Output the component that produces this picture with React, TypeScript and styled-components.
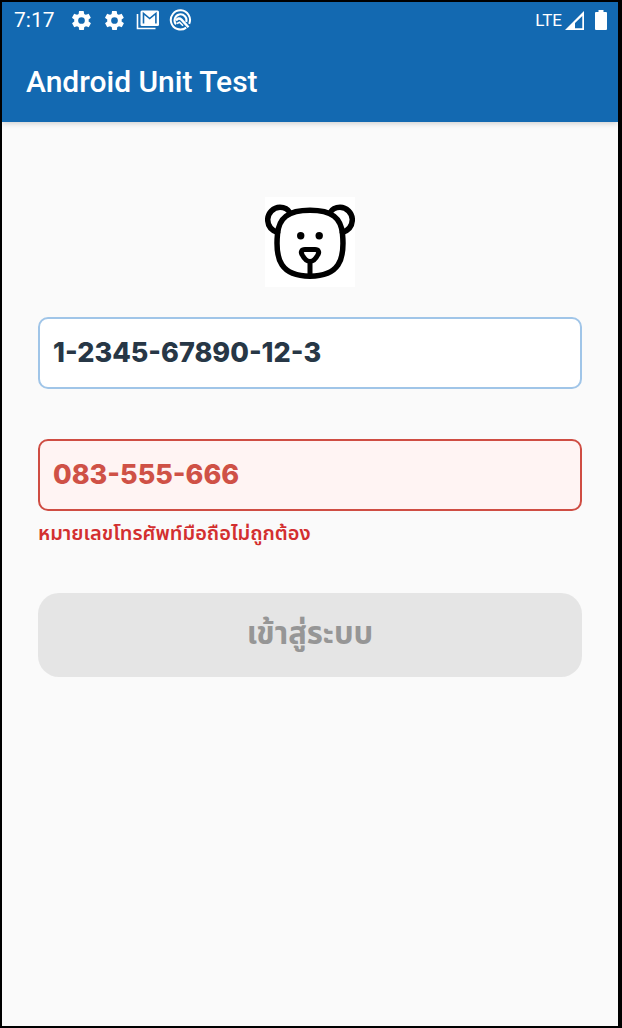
import React, { useState } from "react";
import styled, { createGlobalStyle } from "styled-components";

const GlobalStyle = createGlobalStyle`
  *, *::before, *::after { box-sizing: border-box; }
  body { margin: 0; background: #000; }
`;

const thaiFont = `Inter, "Noto Sans Thai", "Noto Sans", sans-serif`;

const Screen = styled.div`
  min-height: 100vh;
  display: flex;
  flex-direction: column;
  border: 2px solid #000;
  border-right-width: 4px;
  background: #fafafa;
  font-family: Roboto, sans-serif;
`;

const Header = styled.header`
  background: #1369b1;
  color: #fff;
  box-shadow: 0 1px 6px rgba(0, 0, 0, 0.2);
`;

const StatusBar = styled.div`
  display: flex;
  align-items: center;
  justify-content: space-between;
  height: 36px;
  padding: 0 11px 0 12px;
`;

const StatusGroup = styled.div<{ $gap: number }>`
  display: flex;
  align-items: center;
  gap: ${(p) => p.$gap}px;
`;

const Clock = styled.time`
  font-size: 21px;
  line-height: 36px;
  margin-right: 5px;
`;

const Network = styled.span`
  font-size: 17px;
  line-height: 36px;
`;

const StatusIcon = styled.svg`
  display: block;
  flex: none;
`;

const AppBar = styled.div`
  display: flex;
  align-items: center;
  height: 84px;
  padding: 3px 24px 0;
`;

const Title = styled.h1`
  margin: 0;
  font-size: 30px;
  font-weight: 500;
  line-height: 36px;
`;

const Form = styled.form`
  display: flex;
  flex-direction: column;
  padding: 75px 36px 36px;
`;

const Logo = styled.svg`
  display: block;
  align-self: center;
  background: #fff;
  margin-bottom: 30px;
`;

const Field = styled.div`
  display: flex;
  flex-direction: column;
  min-height: 122px;
`;

const TextInput = styled.input<{ $error?: boolean }>`
  width: 100%;
  height: 72px;
  padding: 0 13px 2px;
  border: 2px solid ${(p) => (p.$error ? "#cf4d43" : "#a0c5e8")};
  border-radius: 10px;
  outline: none;
  background: ${(p) => (p.$error ? "#fff4f3" : "#fff")};
  color: ${(p) => (p.$error ? "#cf5146" : "#273746")};
  font-family: ${thaiFont};
  font-size: 27px;
  font-weight: 800;
`;

const ErrorText = styled.p`
  margin: 7px 0 0;
  color: #d32f2f;
  font-family: ${thaiFont};
  font-size: 20px;
  font-weight: 600;
  line-height: 30px;
`;

const SubmitButton = styled.button`
  height: 84px;
  margin-top: 32px;
  padding: 0 24px 2px;
  border: 0;
  border-radius: 21px;
  background: #e5e5e5;
  color: #969696;
  font-family: ${thaiFont};
  font-size: 31px;
  font-weight: 700;
`;

const GearIcon = () => (
  <StatusIcon width="23" height="23" viewBox="0 0 24 24" fill="#fff" aria-hidden="true">
    <path d="M19.4 13c0-.3.1-.6.1-1s0-.7-.1-1l2.100-1.600c.2-.2.2-.4.1-.6l-2-3.500c-.1-.2-.4-.3-.6-.2l-2.500 1c-.5-.4-1.100-.7-1.700-1l-.4-2.600c0-.3-.2-.5-.5-.5h-4c-.3 0-.5.2-.5.4L9 5.100c-.6.2-1.200.6-1.700 1l-2.500-1c-.2-.1-.5 0-.6.2l-2 3.500c-.1.2 0 .5.100.6L4.500 11c0 .3-.1.6-.1 1s0 .7.100 1l-2.100 1.600c-.2.2-.2.4-.1.6l2 3.500c.1.2.4.3.6.2l2.500-1c.5.4 1.100.7 1.700 1l.4 2.600c0 .3.200.5.500.5h4c.3 0 .5-.2.5-.4l.4-2.700c.6-.2 1.200-.6 1.700-1l2.500 1c.2.100.5 0 .6-.2l2-3.500c.1-.2.1-.5-.1-.6zM12 15.500a3.500 3.500 0 1 1 0-7 3.500 3.500 0 0 1 0 7z" />
  </StatusIcon>
);

const MailStackIcon = () => (
  <StatusIcon width="23" height="20" viewBox="0 0 23 20" aria-hidden="true">
    <path d="M1.500 4v14.500h18" fill="none" stroke="#fff" strokeWidth="1.600" />
    <rect x="4.500" y="0.500" width="18.500" height="15.500" rx="1.500" fill="#fff" />
    <path d="M7.500 13.500V3.500l6.200 5 6.200-5v10" fill="none" stroke="#1369b1" strokeWidth="1.600" />
  </StatusIcon>
);

const SearchBadgeIcon = () => (
  <StatusIcon width="23" height="22" viewBox="0 0 23 22" fill="none" stroke="#fff" aria-hidden="true">
    <path d="M17.200 18.600A9.600 9.600 0 1 1 20.200 14.800" strokeWidth="2" />
    <path d="M7 15.300A6 6 0 1 1 17.300 13" strokeWidth="2" />
    <path d="M7 11.500q2.500-3.500 5.500-.8l7 7.500" strokeWidth="2.400" />
    <path d="M8 14.500l2.500-1.300 3.500 3.600" strokeWidth="1.600" />
  </StatusIcon>
);

const SignalIcon = () => (
  <StatusIcon width="19" height="19" viewBox="0 0 19 19" aria-hidden="true">
    <path fillRule="evenodd" fill="#fff" d="M0 19L19 0v19zM10 17.300h7.300V5L10 12z" />
  </StatusIcon>
);

const BatteryIcon = () => (
  <StatusIcon width="12" height="20" viewBox="0 0 12 20" fill="#fff" aria-hidden="true">
    <path d="M3.500 0h5v2H11q1 0 1 1v16q0 1-1 1H1q-1 0-1-1V3q0-1 1-1h2.500z" />
  </StatusIcon>
);

const BearLogo = () => (
  <Logo width="90" height="90" viewBox="0 0 90 90" role="img" aria-label="Bear">
    <g fill="none" stroke="#000" strokeWidth="5.500" strokeLinecap="round" strokeLinejoin="round">
      <path d="M12.500 35.500C6 33 2.700 28 2.700 22.500A12.500 12.500 0 0 1 15 10.300c4.500 0 8 2 10 5.500" />
      <path d="M77.500 35.500C84 33 87.300 28 87.300 22.500A12.500 12.500 0 0 0 75 10.300c-4.500 0-8 2-10 5.500" />
      <path d="M45 13.300C23 13.300 14 21 12.500 37C10 63 16 79.200 45 79.200S80 63 77.500 37C76 21 67 13.300 45 13.300z" />
      <path strokeWidth="5" d="M40 52.500h10c3.500 0 4.500 2.500 3 5C51.500 60.500 48.500 64.500 45 64.500S38.500 60.500 37 57.500C35.500 55 36.500 52.500 40 52.500zM45 65v13" />
    </g>
    <circle cx="35.700" cy="38.700" r="3.700" />
    <circle cx="54.200" cy="38.700" r="3.700" />
  </Logo>
);

export default function App() {
  const [citizenId, setCitizenId] = useState("1-2345-67890-12-3");
  const [phone, setPhone] = useState("083-555-666");

  return (
    <>
      <GlobalStyle />
      <Screen>
        <Header>
          <StatusBar>
            <StatusGroup $gap={10}>
              <Clock>7:17</Clock>
              <GearIcon />
              <GearIcon />
              <MailStackIcon />
              <SearchBadgeIcon />
            </StatusGroup>
            <StatusGroup $gap={11}>
              <StatusGroup $gap={3}>
                <Network>LTE</Network>
                <SignalIcon />
              </StatusGroup>
              <BatteryIcon />
            </StatusGroup>
          </StatusBar>
          <AppBar>
            <Title>Android Unit Test</Title>
          </AppBar>
        </Header>
        <Form onSubmit={(e) => e.preventDefault()}>
          <BearLogo />
          <Field>
            <TextInput
              aria-label="เลขบัตรประชาชน"
              value={citizenId}
              onChange={(e) => setCitizenId(e.target.value)}
            />
          </Field>
          <Field>
            <TextInput
              $error
              type="tel"
              aria-label="หมายเลขโทรศัพท์มือถือ"
              aria-invalid="true"
              aria-describedby="phone-error"
              value={phone}
              onChange={(e) => setPhone(e.target.value)}
            />
            <ErrorText id="phone-error">หมายเลขโทรศัพท์มือถือไม่ถูกต้อง</ErrorText>
          </Field>
          <SubmitButton type="submit" disabled>
            เข้าสู่ระบบ
          </SubmitButton>
        </Form>
      </Screen>
    </>
  );
}
